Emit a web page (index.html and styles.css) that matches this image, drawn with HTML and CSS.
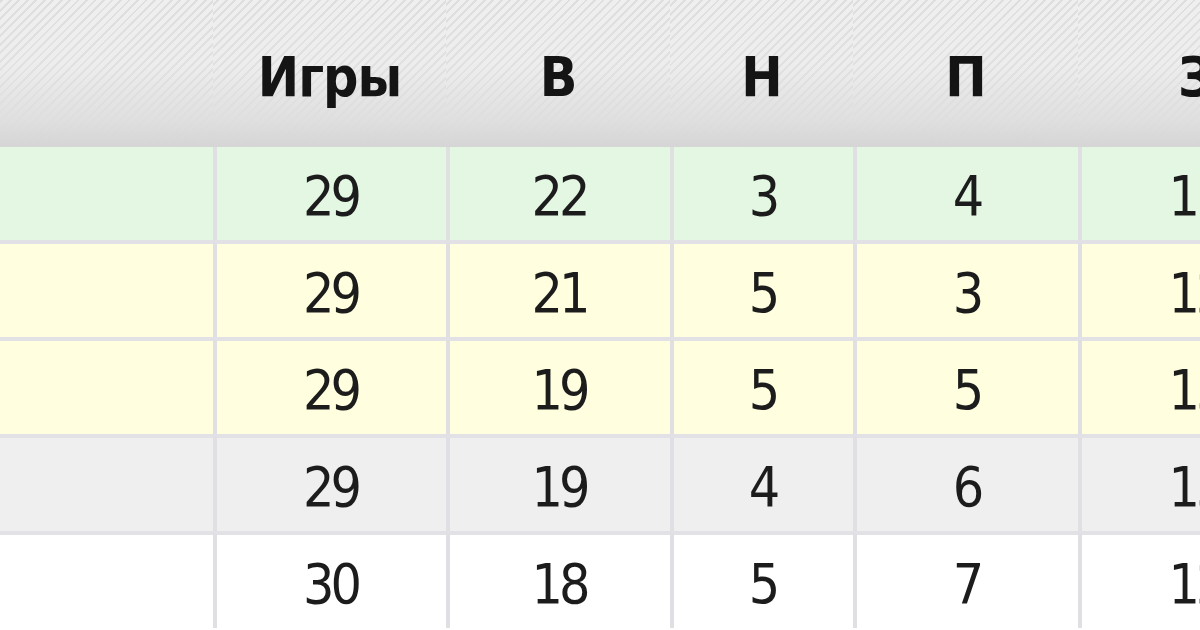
FILE: index.html
```html
<!DOCTYPE html>
<html lang="ru">
<head>
<meta charset="utf-8">
<title>Таблица</title>
<link rel="stylesheet" href="styles.css">
</head>
<body>
<table class="standings">
  <colgroup>
    <col class="c-team">
    <col class="c-games">
    <col class="c-w">
    <col class="c-d">
    <col class="c-l">
    <col class="c-g">
  </colgroup>
  <thead>
    <tr>
      <th></th>
      <th>Игры</th>
      <th>В</th>
      <th>Н</th>
      <th>П</th>
      <th>З</th>
    </tr>
  </thead>
  <tbody>
    <tr class="row-green"><td></td><td>29</td><td>22</td><td>3</td><td>4</td><td>11</td></tr>
    <tr class="row-yellow"><td></td><td>29</td><td>21</td><td>5</td><td>3</td><td>12</td></tr>
    <tr class="row-yellow"><td></td><td>29</td><td>19</td><td>5</td><td>5</td><td>13</td></tr>
    <tr class="row-gray"><td></td><td>29</td><td>19</td><td>4</td><td>6</td><td>13</td></tr>
    <tr class="row-white"><td></td><td>30</td><td>18</td><td>5</td><td>7</td><td>12</td></tr>
  </tbody>
</table>
</body>
</html>
```

FILE: styles.css
```css
html, body {
  margin: 0;
  padding: 0;
  width: 1200px;
  height: 630px;
  overflow: hidden;
  background: #ffffff;
}

.standings {
  border-collapse: separate;
  border-spacing: 0;
  table-layout: fixed;
  width: 1312px;
  font-family: "DejaVu Sans Condensed", "DejaVu Sans", Tahoma, sans-serif;
  font-size: 55px;
  color: #1c1c1c;
}

.c-team { width: 213px; }
.c-games { width: 233px; }
.c-w { width: 224px; }
.c-d { width: 183px; }
.c-l { width: 225px; }
.c-g { width: 234px; }

.standings th {
  height: 141px;
  padding: 6px 0 0;
  font-weight: bold;
  color: #141414;
  text-align: center;
  vertical-align: middle;
  letter-spacing: -1px;
  background:
    linear-gradient(to bottom,
      rgba(236, 236, 236, 0) 0%,
      rgba(232, 232, 232, 0.3) 45%,
      rgba(222, 222, 222, 0.92) 82%,
      #d5d5d5 100%),
    repeating-linear-gradient(-45deg,
      #dedede 0 2px,
      #efefef 2px 6px);
}

.standings td {
  height: 89px;
  padding: 4px 0 0;
  text-align: center;
  vertical-align: middle;
  letter-spacing: -4px;
  text-indent: -2px;
  border-top: 4px solid #e2e2e6;
  border-left: 4px solid #e0e0e4;
}

.standings tbody tr:first-child td {
  border-top: 0;
}

.standings td:first-child {
  border-left: 0;
}

.row-green td { background: #e3f7e3; }
.row-yellow td { background: #ffffdf; }
.row-gray td { background: #efefef; }
.row-white td { background: #ffffff; }
```
